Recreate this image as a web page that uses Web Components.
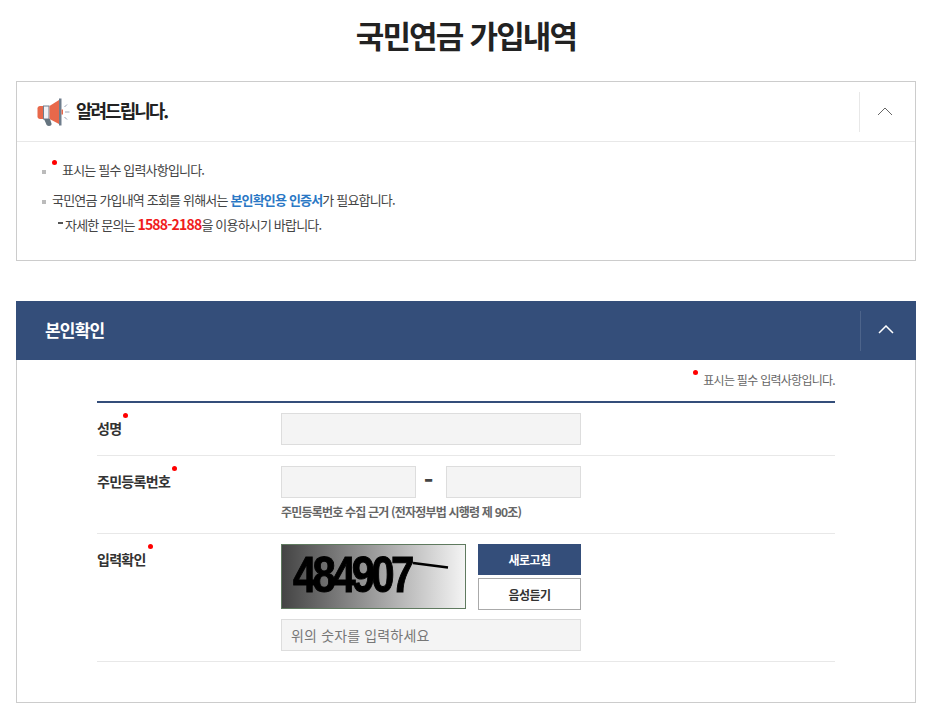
<!DOCTYPE html>
<html lang="ko">
<head>
<meta charset="utf-8">
<title>국민연금 가입내역</title>
<style>
html, body { margin: 0; padding: 0; background: #fff; }
body { font-family: "Noto Sans CJK KR", "Noto Sans", sans-serif; color: #333; overflow: hidden; height: 709px; }
</style>
</head>
<body>
<page-view></page-view>

<template id="page-tpl">
  <style>
    :host { display: flex; flex-direction: column; width: 900px; margin-left: 16px; }
    h1 { margin: 0; height: 81px; padding-top: 14px; box-sizing: border-box; text-align: center; font-size: 31px; line-height: 42px; font-weight: 700; color: #222; letter-spacing: -1.8px; }
  </style>
  <h1>국민연금 가입내역</h1>
  <notice-box></notice-box>
  <verify-box></verify-box>
</template>

<template id="notice-tpl">
  <style>
    :host { display: block; height: 180px; box-sizing: border-box; border: 1px solid #ccc; margin-bottom: 40px; }
    .head { height: 60px; box-sizing: border-box; display: flex; align-items: center; border-bottom: 1px solid #e8e8e8; padding-left: 20px; }
    .head svg.horn { display: block; margin-right: 6px; }
    .head b { flex: 1; font-size: 18px; line-height: 24px; padding-bottom: 3px; font-weight: 700; color: #222; letter-spacing: -2px; }
    .toggle { box-sizing: border-box; width: 56px; height: 40px; padding-right: 5px; border-left: 1px solid #e8e8e8; display: flex; align-items: center; justify-content: center; }
    ul { list-style: none; margin: 0; padding: 15px 25px 0; font-size: 13px; letter-spacing: -0.82px; color: #444; }
    li { position: relative; line-height: 25px; padding-left: 10px; }
    li::before { content: ""; position: absolute; left: 0; top: 13px; width: 4px; height: 4px; background: #bbb; }
    li + li { margin-top: 5px; }
    .sub { display: block; padding-left: 6px; }
    .sub::before { content: ""; display: inline-block; width: 5px; height: 2px; background: #555; margin-right: 2px; vertical-align: 6px; }
    .blue { color: #2a78c5; font-weight: 700; }
    .red { color: #f01c1c; font-weight: 700; font-size: 14px; }
    .dot { display: inline-block; width: 5px; height: 5px; border-radius: 50%; background: #f00; vertical-align: 10px; margin-right: 5px; }
  </style>
  <div class="head">
    <svg class="horn" width="33" height="28" viewBox="0 0 33 28">
      <path d="M3 8h4v13H3c-1.500 0-2.500-1-2.500-2.500v-8C.5 9 1.500 8 3 8z" fill="#e8684a"/>
      <path d="M6 7.500h6.500v14H6z" fill="#6f7d8c"/>
      <path d="M7 8.500h4.500v12H7z" fill="#f1f1f4"/>
      <path d="M12.500 8L22 2v24l-9.500-5z" fill="#e8684a"/>
      <path d="M22 .5h2.500v27H22z" fill="#6f7d8c"/>
      <path d="M7 21h6l1.500 4.500c.3 1.500-.6 2.500-2.500 2.500s-2.600-1-3-2.500z" fill="#65747f"/>
      <path d="M24.500 11.500h1.500v5h-1.500z" fill="#e8684a"/>
      <path d="M27.500 9l2.500-2.500M28 14h4.500M27.500 19l2.500 2.500" stroke="#9aa3b5" fill="none"/>
    </svg>
    <b>알려드립니다.</b>
    <div class="toggle">
      <svg width="16" height="9" viewBox="0 0 16 9"><path d="M1 8l7-7 7 7" fill="none" stroke="#666" stroke-width="1"/></svg>
    </div>
  </div>
  <ul>
    <li><span class="dot"></span>표시는 필수 입력사항입니다.</li>
    <li>국민연금 가입내역 조회를 위해서는 <span class="blue">본인확인용 인증서</span>가 필요합니다.
      <span class="sub">자세한 문의는 <span class="red">1588-2188</span>을 이용하시기 바랍니다.</span></li>
  </ul>
</template>

<template id="verify-tpl">
  <style>
    :host { display: block; }
    .head { height: 59px; background: #344e7a; display: flex; align-items: center; padding-left: 29px; }
    .head b { flex: 1; color: #fff; font-size: 17px; line-height: 24px; padding-bottom: 2px; font-weight: 700; letter-spacing: -0.8px; }
    .toggle { box-sizing: border-box; width: 56px; height: 40px; padding: 0 6px 2px 0; border-left: 1px solid #4d648b; display: flex; align-items: center; justify-content: center; }
    .body { height: 343px; box-sizing: border-box; border: 1px solid #ccc; border-top: 0; padding: 0 80px; }
    .req { height: 41px; box-sizing: border-box; padding-bottom: 3px; display: flex; justify-content: flex-end; align-items: center; font-size: 12px; letter-spacing: -0.72px; color: #666; }
    .dot { display: inline-block; width: 5px; height: 5px; border-radius: 50%; background: #f00; vertical-align: 10px; margin-right: 5px; }
    .rows { border-top: 2px solid #344e7a; }
    .dash { width: 30px; height: 32px; box-sizing: border-box; padding-right: 5px; text-align: center; font-size: 26px; line-height: 26px; font-weight: 700; color: #444; }
    .law { font-size: 12px; font-weight: 700; letter-spacing: -0.8px; color: #666; line-height: 16px; margin-top: 6px; }
  </style>
  <div class="head">
    <b>본인확인</b>
    <div class="toggle">
      <svg width="16" height="9" viewBox="0 0 16 9"><path d="M1 8l7-7 7 7" fill="none" stroke="#fff" stroke-width="1.500"/></svg>
    </div>
  </div>
  <div class="body">
    <div class="req"><span><span class="dot"></span>표시는 필수 입력사항입니다.</span></div>
    <div class="rows">
      <form-row label="성명" style="--h:53px">
        <text-box style="--w:300px"></text-box>
      </form-row>
      <form-row label="주민등록번호" style="--h:78px">
        <div style="display:flex;align-items:center">
          <text-box style="--w:135px"></text-box>
          <span class="dash">-</span>
          <text-box style="--w:135px"></text-box>
        </div>
        <div class="law">주민등록번호 수집 근거 (전자정부법 시행령 제 90조)</div>
      </form-row>
      <form-row label="입력확인" style="--h:128px">
        <captcha-box></captcha-box>
      </form-row>
    </div>
  </div>
</template>

<template id="row-tpl">
  <style>
    :host { display: flex; height: var(--h); box-sizing: border-box; border-bottom: 1px solid #e8e8e8; padding-top: 10px; }
    .lab { width: 184px; font-size: 14px; font-weight: 700; color: #333; letter-spacing: -0.7px; line-height: 20px; padding-top: 5px; }
    .lab i { display: inline-block; position: relative; top: -5px; width: 5px; height: 5px; border-radius: 50%; background: #f00; vertical-align: 11px; margin-left: 2px; }
  </style>
  <div class="lab"><span id="t"></span><i></i></div>
  <div><slot></slot></div>
</template>

<template id="input-tpl">
  <style>
    :host { display: block; width: var(--w); }
    input { display: block; width: 100%; height: 32px; box-sizing: border-box; border: 1px solid #ddd; background: #f4f4f4; padding: 0 9px; margin: 0; font: 14px "Noto Sans CJK KR", sans-serif; letter-spacing: 0.15px; outline: 0; }
    input::placeholder { color: #777; opacity: 1; }
  </style>
  <input>
</template>

<template id="captcha-tpl">
  <style>
    :host { display: block; width: 300px; }
    .top { display: flex; justify-content: space-between; margin-bottom: 9px; }
    .img { width: 185px; height: 65px; box-sizing: border-box; border: 1px solid #5f7a5f; background: linear-gradient(90deg, #444, #f4f4f4); position: relative; overflow: hidden; }
    .img span { position: absolute; left: 11px; top: 0; font: 700 50px/60px "Liberation Sans", sans-serif; letter-spacing: -4.500px; color: #000; -webkit-text-stroke: 1px #000; transform: scaleX(.84); transform-origin: left; filter: blur(.4px); }
    .img svg { position: absolute; left: 0; top: 0; }
    .btns { width: 103px; display: flex; flex-direction: column; gap: 3px; }
    .btns div { box-sizing: border-box; height: 31px; display: flex; align-items: center; justify-content: center; font-size: 12px; font-weight: 700; letter-spacing: -0.5px; }
    .b1 { background: #344e7a; color: #fff; }
    .btns .b2 { background: #fff; color: #333; border: 1px solid #aaa; height: 32px; }
  </style>
  <div class="top">
    <div class="img">
      <span>484907</span>
      <svg width="183" height="63"><path d="M131 18l35 4.500" stroke="#000" stroke-width="2.500"/></svg>
    </div>
    <div class="btns"><div class="b1">새로고침</div><div class="b2">음성듣기</div></div>
  </div>
  <text-box style="--w:300px" placeholder="위의 숫자를 입력하세요"></text-box>
</template>

<script>
function shadowFrom(el, id) {
  const root = el.attachShadow({ mode: 'open' });
  root.appendChild(document.getElementById(id).content.cloneNode(true));
  return root;
}
class NoticeBox extends HTMLElement { connectedCallback() { shadowFrom(this, 'notice-tpl'); } }
class VerifyBox extends HTMLElement { connectedCallback() { shadowFrom(this, 'verify-tpl'); } }
class CaptchaBox extends HTMLElement { connectedCallback() { shadowFrom(this, 'captcha-tpl'); } }
class PageView extends HTMLElement { connectedCallback() { shadowFrom(this, 'page-tpl'); } }
class FormRow extends HTMLElement {
  connectedCallback() {
    const root = shadowFrom(this, 'row-tpl');
    root.getElementById('t').textContent = this.getAttribute('label');
  }
}
class TextBox extends HTMLElement {
  connectedCallback() {
    const root = shadowFrom(this, 'input-tpl');
    root.querySelector('input').placeholder = this.getAttribute('placeholder') || '';
  }
}
customElements.define('form-row', FormRow);
customElements.define('text-box', TextBox);
customElements.define('captcha-box', CaptchaBox);
customElements.define('notice-box', NoticeBox);
customElements.define('verify-box', VerifyBox);
customElements.define('page-view', PageView);
</script>
</body>
</html>
